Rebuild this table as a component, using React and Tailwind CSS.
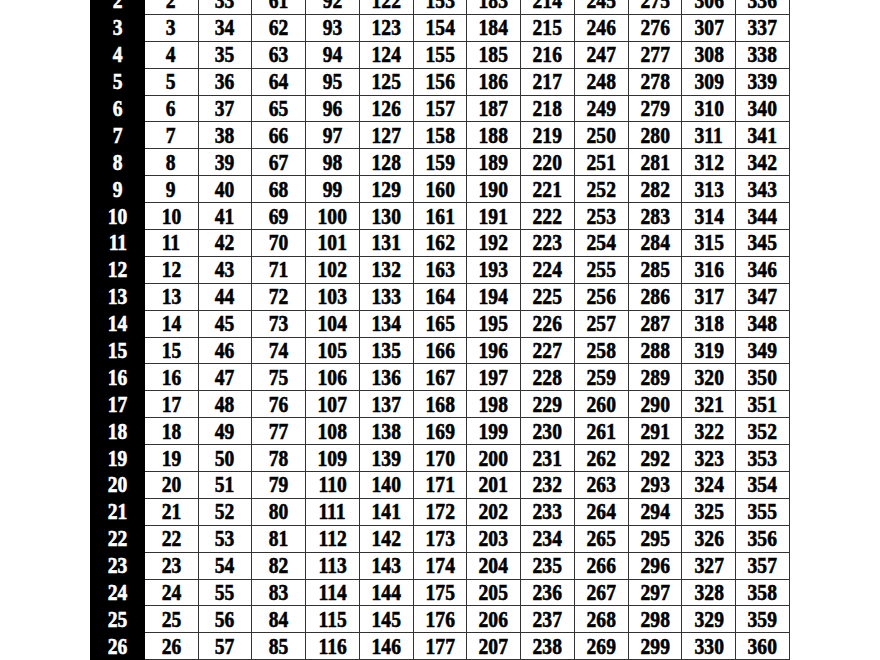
import React from 'react';

const monthDays = [31, 28, 31, 30, 31, 30, 31, 31, 30, 31, 30, 31];
const offsets = monthDays.reduce((acc, d, i) => {
  acc.push(i === 0 ? 0 : acc[i - 1] + monthDays[i - 1]);
  return acc;
}, []);

// rows start at day 2, the first one sits partly above the window
const days = Array.from({ length: 30 }, (_, i) => i + 2);

const Num = ({ children }) => (
  <span className="inline-block scale-x-85 [-webkit-text-stroke:0.6px_currentColor]">{children}</span>
);

export default function App() {
  return (
    <div className="h-[660px] overflow-hidden bg-white">
      <div className="-mt-[13px] flex justify-center">
        <table
          className="w-[700px] table-fixed border-collapse text-[23px] font-bold leading-none"
          style={{ fontFamily: '"Liberation Serif", "Times New Roman", serif' }}
        >
          <tbody>
            {days.map((day) => (
              <tr key={day} className="h-[26.9px]">
                <td className="border-x border-black bg-black p-0 text-center text-white">
                  <Num>{day}</Num>
                </td>
                {offsets.map((off, m) => (
                  <td key={m} className="border border-[#333] p-0 text-center text-black">
                    {day <= monthDays[m] ? <Num>{off + day}</Num> : ''}
                  </td>
                ))}
              </tr>
            ))}
          </tbody>
        </table>
      </div>
    </div>
  );
}
